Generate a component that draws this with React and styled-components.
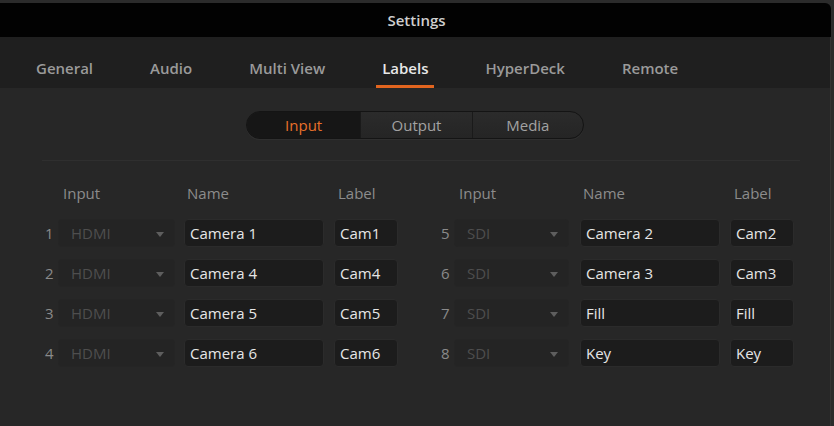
import React, { useState } from 'react';
import styled, { createGlobalStyle } from 'styled-components';

const GlobalStyle = createGlobalStyle`
  html, body {
    margin: 0;
    padding: 0;
    background: #2b2b2b;
    font-family: "Open Sans", "Liberation Sans", sans-serif;
  }
  * { box-sizing: border-box; }
`;

const Window = styled.div`
  margin: 3px 3px 0 0;
  height: 423px;
  border-radius: 0 6px 0 0;
  overflow: hidden;
  display: flex;
  flex-direction: column;
  background: #272727;
`;

const TitleBar = styled.div`
  height: 34px;
  background: #020202;
  color: #cfcfcf;
  font-size: 15px;
  font-weight: 600;
  display: flex;
  align-items: center;
  justify-content: center;
  padding-left: 2px;
`;

const TabBar = styled.div`
  height: 51px;
  background: #1f1f1f;
  display: flex;
  gap: 45px;
  padding-left: 30px;
  border-right: 1px solid #343434;
`;

const Tab = styled.div`
  height: 51px;
  padding: 21px 6px 0;
  line-height: 20px;
  font-size: 15px;
  font-weight: 600;
  color: ${p => (p.$active ? '#e8e8e8' : '#9a9a9a')};
  border-bottom: 3px solid ${p => (p.$active ? '#e2651f' : 'transparent')};
  cursor: pointer;
`;

const Content = styled.div`
  flex: 1;
  border-right: 1px solid #343434;
  padding-top: 23px;
`;

const Segmented = styled.div`
  width: 338px;
  height: 28px;
  margin: 0 auto;
  display: flex;
  border: 1px solid #141414;
  border-radius: 14px;
  overflow: hidden;
  background: linear-gradient(#2b2b2b, #252525);
  box-shadow: 0 1px 0 #2f2f2f;
`;

const Segment = styled.div`
  width: ${p => p.$w}px;
  display: flex;
  align-items: center;
  justify-content: center;
  font-size: 15px;
  color: ${p => (p.$active ? '#e8702a' : '#a2a2a2')};
  background: ${p => (p.$active ? '#161616' : 'transparent')};
  border-left: ${p => (p.$first ? 'none' : '1px solid #1a1a1a')};
  cursor: pointer;
`;

const Divider = styled.div`
  height: 1px;
  margin: 21px 30px 0 42px;
  background: #2f2f2f;
`;

const Groups = styled.div`
  display: flex;
  gap: 40px;
  padding: 22px 0 0 42px;
`;

const Grid = styled.div`
  display: grid;
  grid-template-columns: 16px 126px 150px 64px;
  grid-template-rows: 24px;
  grid-auto-rows: 28px;
  row-gap: 12px;
  align-items: center;
`;

const Head = styled.div`
  font-size: 15px;
  color: #8c8c8c;
  padding-left: ${p => p.$pad}px;
  line-height: 20px;
  align-self: start;
`;

const Num = styled.div`
  font-size: 15px;
  color: #8a8a8a;
  padding-left: 3px;
`;

const Dropdown = styled.div`
  width: ${p => p.$w}px;
  height: 28px;
  border-radius: 4px;
  background: #242424;
  border: 1px solid #252525;
  display: flex;
  align-items: center;
  justify-content: space-between;
  padding: 0 10px 0 12px;
  font-size: 15px;
  color: #4e4e4e;
`;

const Arrow = styled.span`
  width: 0;
  height: 0;
  border-left: 4px solid transparent;
  border-right: 4px solid transparent;
  border-top: 5px solid #5e5e5e;
  margin-top: 2px;
`;

const Field = styled.input`
  width: ${p => p.$w}px;
  height: 28px;
  border-radius: 4px;
  background: #1c1c1c;
  border: 1px solid #2b2b2b;
  color: #e6e6e6;
  font-family: "Open Sans", "Liberation Sans", sans-serif;
  font-size: 15px;
  padding: 0 5px;
  outline: none;
`;

const tabs = ['General', 'Audio', 'Multi View', 'Labels', 'HyperDeck', 'Remote'];

const groups = [
  {
    type: 'HDMI',
    ddw: 117,
    rows: [
      [1, 'Camera 1', 'Cam1'],
      [2, 'Camera 4', 'Cam4'],
      [3, 'Camera 5', 'Cam5'],
      [4, 'Camera 6', 'Cam6'],
    ],
  },
  {
    type: 'SDI',
    ddw: 115,
    rows: [
      [5, 'Camera 2', 'Cam2'],
      [6, 'Camera 3', 'Cam3'],
      [7, 'Fill', 'Fill'],
      [8, 'Key', 'Key'],
    ],
  },
];

const App = () => {
  const [tab, setTab] = useState('Labels');
  const [seg, setSeg] = useState('Input');

  return (
    <>
      <GlobalStyle />
      <Window>
        <TitleBar>Settings</TitleBar>
        <TabBar>
          {tabs.map(t => (
            <Tab key={t} $active={t === tab} onClick={() => setTab(t)}>{t}</Tab>
          ))}
        </TabBar>
        <Content>
          <Segmented>
            {[['Input', 114], ['Output', 112], ['Media', 112]].map(([s, w], i) => (
              <Segment key={s} $w={w} $first={i === 0} $active={s === seg} onClick={() => setSeg(s)}>
                {s}
              </Segment>
            ))}
          </Segmented>
          <Divider />
          <Groups>
            {groups.map(g => (
              <Grid key={g.type}>
                <div />
                <Head $pad={5}>Input</Head>
                <Head $pad={3}>Name</Head>
                <Head $pad={4}>Label</Head>
                {g.rows.map(([n, name, label]) => (
                  <React.Fragment key={n}>
                    <Num>{n}</Num>
                    <Dropdown $w={g.ddw}>
                      {g.type}
                      <Arrow />
                    </Dropdown>
                    <Field $w={140} defaultValue={name} />
                    <Field $w={64} defaultValue={label} />
                  </React.Fragment>
                ))}
              </Grid>
            ))}
          </Groups>
        </Content>
      </Window>
    </>
  );
};

export default App;
